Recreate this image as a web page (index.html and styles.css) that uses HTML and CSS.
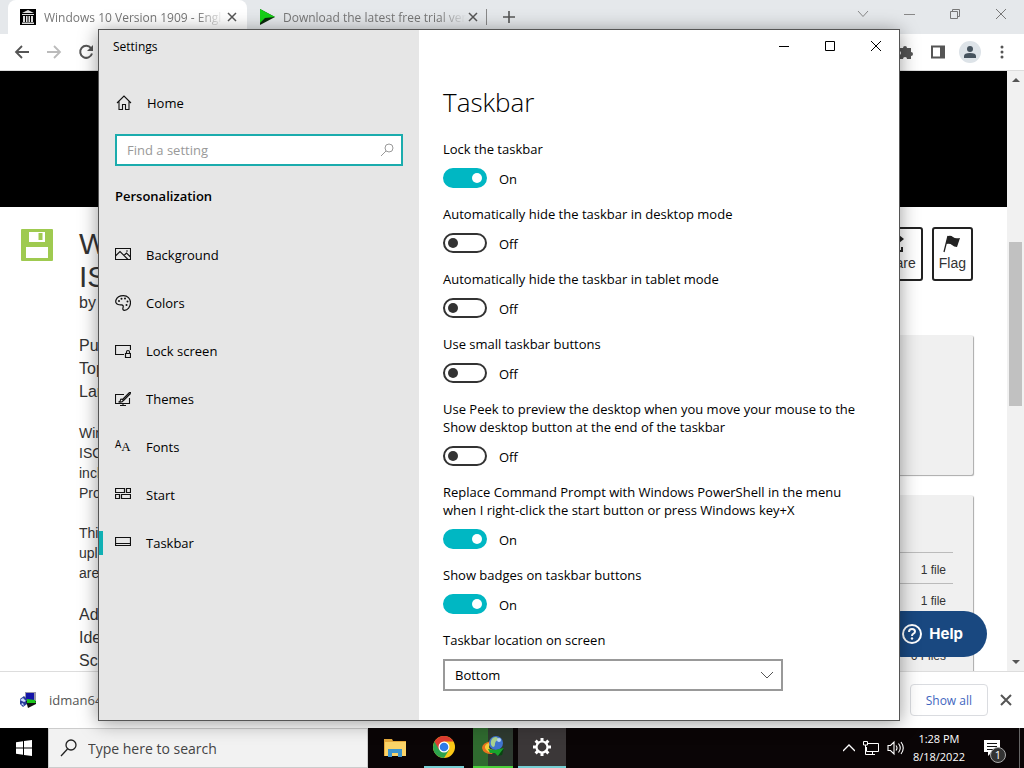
FILE: index.html
```html
<!DOCTYPE html>
<html lang="en">

<head>
    <meta charset="UTF-8">
    <title>Settings - Taskbar</title>
    <meta name="viewport" content="width=device-width, initial-scale=1.0" />
    <link rel="stylesheet" href="styles.css">
</head>

<body>

    <div class="desktop">

        <!-- Browser -->
        <div class="browser">
            <div class="tabs">
                <div class="tab active">
                    <svg class="favicon" width="16" height="16" viewBox="0 0 16 16">
                        <path d="M0 0h16v16H0z" fill="#000" />
                        <path d="M8 1l6 3H2zM2 5h12v1H2zM3 7h2v6H3zM6 7h1.500v6H6zM8.500 7H10v6H8.500zM11 7h2v6h-2zM2 13.500h12V15H2z" fill="#ddd" />
                    </svg>
                    <span class="tab-title">Windows 10 Version 1909 - Engl</span>
                    <button class="icon-btn" aria-label="Close tab">
                        <svg width="10" height="10" viewBox="0 0 10 10"><path d="M1 1l8 8M9 1L1 9" stroke="#555" stroke-width="1.500" /></svg>
                    </button>
                </div>
                <div class="tab">
                    <svg class="favicon" width="16" height="16" viewBox="0 0 16 16">
                        <path d="M1 0l15 8-15 8z" fill="#0b2a0b" />
                        <path d="M1 0l15 8-10 1-5 5z" fill="#16d016" />
                    </svg>
                    <span class="tab-title">Download the latest free trial ver</span>
                    <button class="icon-btn" aria-label="Close tab">
                        <svg width="10" height="10" viewBox="0 0 10 10"><path d="M1 1l8 8M9 1L1 9" stroke="#555" stroke-width="1.500" /></svg>
                    </button>
                </div>
                <button class="icon-btn new-tab" aria-label="New tab">
                    <svg width="12" height="12" viewBox="0 0 12 12"><path d="M6 0v12M0 6h12" stroke="#555" stroke-width="1.600" /></svg>
                </button>
                <div class="browser-controls">
                    <button class="icon-btn" aria-label="Search tabs">
                        <svg width="12" height="12" viewBox="0 0 12 12"><path d="M1 3l5 5.500L11 3" fill="none" stroke="#888" /></svg>
                    </button>
                    <button class="icon-btn" aria-label="Minimize browser">
                        <svg width="12" height="12" viewBox="0 0 12 12"><path d="M1 6.500h11" stroke="#888" /></svg>
                    </button>
                    <button class="icon-btn" aria-label="Restore browser">
                        <svg width="12" height="12" viewBox="0 0 12 12"><path d="M1.500 3.500h7v7h-7zM3.500 3.500v-2h7v7h-2" fill="none" stroke="#777" /></svg>
                    </button>
                    <button class="icon-btn" aria-label="Close browser">
                        <svg width="12" height="12" viewBox="0 0 12 12"><path d="M1 1l10 10M11 1L1 11" stroke="#777" /></svg>
                    </button>
                </div>
            </div>

            <div class="toolbar">
                <button class="icon-btn" aria-label="Back">
                    <svg width="16" height="16" viewBox="0 0 16 16"><path d="M15 8H2M8 2L2 8l6 6" fill="none" stroke="#555" stroke-width="1.800" /></svg>
                </button>
                <button class="icon-btn" aria-label="Forward">
                    <svg width="16" height="16" viewBox="0 0 16 16"><path d="M1 8h13M8 2l6 6-6 6" fill="none" stroke="#bbb" stroke-width="1.800" /></svg>
                </button>
                <button class="icon-btn" aria-label="Reload">
                    <svg width="16" height="16" viewBox="0 0 16 16">
                        <path d="M13 4.200A6 6 0 1 0 14 9.500" fill="none" stroke="#555" stroke-width="2" />
                        <path d="M15 1v6H9z" fill="#555" />
                    </svg>
                </button>
                <div class="toolbar-right">
                    <button class="icon-btn" aria-label="Extensions">
                        <svg width="16" height="16" viewBox="0 0 16 16"><path d="M1 4h4a2 2 0 1 1 4 0h4v4a2 2 0 1 1 0 4v3H9a2 2 0 0 0-4 0H1v-4a2 2 0 0 0 0-4z" fill="#555" /></svg>
                    </button>
                    <button class="icon-btn" aria-label="Side panel">
                        <svg width="16" height="16" viewBox="0 0 16 16"><path d="M2 2.500h12v11H2z" fill="none" stroke="#555" stroke-width="2" /><path d="M10 2h5v12h-5z" fill="#555" /></svg>
                    </button>
                    <button class="icon-btn" aria-label="Profile">
                        <svg width="22" height="22" viewBox="0 0 22 22"><circle cx="11" cy="11" r="11" fill="#dde3e8" /><circle cx="11" cy="8" r="3" fill="#46535e" /><path d="M5 17v-2q0-3 6-3t6 3v2z" fill="#46535e" /></svg>
                    </button>
                    <button class="icon-btn" aria-label="Menu">
                        <svg width="16" height="16" viewBox="0 0 16 16" fill="#555"><circle cx="8" cy="3" r="1.500" /><circle cx="8" cy="8" r="1.500" /><circle cx="8" cy="13" r="1.500" /></svg>
                    </button>
                </div>
            </div>

            <div class="viewport">
                <div class="page">
                    <div class="banner"></div>
                    <div class="item">
                        <svg class="floppy" width="32" height="32" viewBox="0 0 32 32">
                            <rect width="32" height="32" rx="1" fill="#9fca50" />
                            <path d="M8 3h16v10H8zM5 18h22v11H5z" fill="#fff" />
                            <path d="M17.500 4h4v7h-4z" fill="#9fca50" />
                        </svg>
                        <div class="item-info">
                            <h1>W<br>IS</h1>
                            <div class="byline">by</div>
                            <div class="meta">Pu<br>Top<br>Lan</div>
                            <p>Win<br>ISO<br>incl<br>Pro</p>
                            <p>This<br>upl<br>are</p>
                            <div class="meta">Ad<br>Ide<br>Sc</div>
                        </div>
                        <div class="item-side">
                            <div class="actions">
                                <button class="action">
                                    <svg width="18" height="18" viewBox="0 0 18 18"><path d="M3 8v8h11v-4M5 9q0-5 6-5" fill="none" stroke="#222" stroke-width="2" /><path d="M11 0l5 4-5 4z" fill="#222" /></svg>
                                    Share
                                </button>
                                <button class="action">
                                    <svg width="18" height="18" viewBox="0 0 18 18"><path d="M5 1L1 17" stroke="#222" stroke-width="1.300" /><path d="M5 1q3-1 5 1t7 1l-3 9q-3 0-5-2t-6-1z" fill="#222" /></svg>
                                    Flag
                                </button>
                            </div>
                            <div class="card stats"></div>
                            <div class="card downloads">
                                <div class="file-row">1 file</div>
                                <div class="file-row">1 file</div>
                                <div class="file-total">6 Files</div>
                            </div>
                        </div>
                    </div>
                    <button class="help">
                        <svg width="20" height="20" viewBox="0 0 20 20"><circle cx="10" cy="10" r="9" fill="none" stroke="#fff" stroke-width="2" /><path d="M7 8q0-3 3-3t3 2.500q0 1.500-1.500 2.200T10 12" fill="none" stroke="#fff" stroke-width="2" /><circle cx="10" cy="14.500" r="1.200" fill="#fff" /></svg>
                        Help
                    </button>
                </div>
                <div class="scrollbar">
                    <svg width="8" height="4" viewBox="0 0 8 4"><path d="M0 4l4-4 4 4z" fill="#555" /></svg>
                    <div class="thumb"></div>
                    <svg width="8" height="4" viewBox="0 0 8 4"><path d="M0 0l4 4 4-4z" fill="#555" /></svg>
                </div>
            </div>

            <div class="download-bar">
                <svg width="16" height="16" viewBox="0 0 16 16">
                    <path d="M5 0h11v9H5z" fill="#99a" />
                    <path d="M6 1h8v7H6z" fill="#1414a8" />
                    <path d="M0 7l4-3 3 3v5l-4 3-3-3z" fill="#2a3d9c" />
                    <path d="M0 8l3-2 3 3-2 1zM1 12l2-1 1 3z" fill="#cdf" />
                    <path d="M6 9l10 0v3l-8 4z" fill="#111" />
                    <path d="M7 7l8 1 1 3H7z" fill="#1cc81c" />
                </svg>
                <span class="download-name">idman64</span>
                <button class="show-all">Show all</button>
                <button class="icon-btn" aria-label="Close downloads">
                    <svg width="12" height="12" viewBox="0 0 12 12"><path d="M1 1l10 10M11 1L1 11" stroke="#555" stroke-width="2" /></svg>
                </button>
            </div>
        </div>

        <!-- Settings window -->
        <div class="settings">
            <aside class="sidebar">
                <div class="window-title">Settings</div>
                <a class="home" href="#">
                    <svg width="16" height="16" viewBox="0 0 16 16"><path d="M1 8l7-7 7 7M3 6.500V14.500h3.500v-5h3v5H13V6.500" fill="none" stroke="#111" stroke-width="1.100" /></svg>
                    Home
                </a>
                <div class="search">
                    <input type="text" placeholder="Find a setting" aria-label="Find a setting">
                    <svg width="14" height="14" viewBox="0 0 14 14"><circle cx="9" cy="5" r="4" fill="none" stroke="#999" /><path d="M6 8l-5 5" stroke="#999" /></svg>
                </div>
                <h2>Personalization</h2>
                <nav>
                    <a href="#">
                        <svg width="16" height="16" viewBox="0 0 16 16"><path d="M.5 1.500h15v11H.5zM.5 9l4.500-4.500 8 8M9 8.500l2.500-2.500 4 4" fill="none" stroke="#111" stroke-width="1.100" /><circle cx="12" cy="4" r=".8" fill="#111" /></svg>
                        Background
                    </a>
                    <a href="#">
                        <svg width="16" height="16" viewBox="0 0 16 16"><path d="M1 5C2 2 5 .6 8.500.6c4 0 7 3 7 7 0 4.500-3 7.700-6 7.700-1.500 0-2-1-1.500-2.500.6-1.800 0-3-1.500-3S5 10 3 9.500C1 9 .3 7 1 5z" fill="none" stroke="#111" stroke-width="1.200" /><g fill="#111"><circle cx="4" cy="6" r="1" /><circle cx="6.500" cy="3.700" r="1" /><circle cx="10" cy="3.500" r="1" /><circle cx="12.500" cy="6.500" r="1" /><circle cx="11.500" cy="10" r="1" /></g></svg>
                        Colors
                    </a>
                    <a href="#">
                        <svg width="16" height="16" viewBox="0 0 16 16"><path d="M9 11.500H.5v-9h15V7M10.500 10.500h5v4h-5zM11.500 10.500V9q0-1.500 1.500-1.500T14.500 9v1.500" fill="none" stroke="#111" stroke-width="1.200" /></svg>
                        Lock screen
                    </a>
                    <a href="#">
                        <svg width="16" height="16" viewBox="0 0 16 16"><path d="M9 3.500H.5v9h14V7M5 14.500h6M8 12.500v2M14.500 1.500l-7 7M15.500 2.500l-7 7M14.500 1.500h1v1M7.500 8.500l1 1q-1 2-5 1.500 2-.5 2-2t2-.5z" fill="none" stroke="#111" stroke-width="1.100" /></svg>
                        Themes
                    </a>
                    <a href="#">
                        <span class="font-icon" aria-hidden="true"><span>A</span><span class="big">A</span></span>
                        Fonts
                    </a>
                    <a href="#">
                        <svg width="16" height="16" viewBox="0 0 16 16"><path d="M.5 1.500h9v4h-9zM11.500 1.500h4v4h-4zM.5 7.500h4v4h-4zM6.500 7.500h9v4h-9z" fill="none" stroke="#111" stroke-width="1.200" /></svg>
                        Start
                    </a>
                    <a class="current" href="#">
                        <svg width="16" height="16" viewBox="0 0 16 16"><path d="M.5 2.500h15v8H.5zM.5 8.500h15" fill="none" stroke="#111" stroke-width="1.200" /></svg>
                        Taskbar
                    </a>
                </nav>
            </aside>

            <main class="content">
                <div class="window-controls">
                    <button aria-label="Minimize">
                        <svg width="12" height="12" viewBox="0 0 12 12"><path d="M1 6.500h10" stroke="#000" /></svg>
                    </button>
                    <button aria-label="Maximize">
                        <svg width="12" height="12" viewBox="0 0 12 12"><path d="M1.500 1.500h9v9h-9z" fill="none" stroke="#000" /></svg>
                    </button>
                    <button aria-label="Close">
                        <svg width="12" height="12" viewBox="0 0 12 12"><path d="M1 1l10 10M11 1L1 11" stroke="#000" /></svg>
                    </button>
                </div>
                <h1>Taskbar</h1>
                <form class="options">
                    <div class="option">
                        <label for="lock">Lock the taskbar</label>
                        <div class="switch"><input type="checkbox" id="lock" checked><span>On</span></div>
                    </div>
                    <div class="option">
                        <label for="hide-desktop">Automatically hide the taskbar in desktop mode</label>
                        <div class="switch"><input type="checkbox" id="hide-desktop"><span>Off</span></div>
                    </div>
                    <div class="option">
                        <label for="hide-tablet">Automatically hide the taskbar in tablet mode</label>
                        <div class="switch"><input type="checkbox" id="hide-tablet"><span>Off</span></div>
                    </div>
                    <div class="option">
                        <label for="small">Use small taskbar buttons</label>
                        <div class="switch"><input type="checkbox" id="small"><span>Off</span></div>
                    </div>
                    <div class="option">
                        <label for="peek">Use Peek to preview the desktop when you move your mouse to the Show desktop button at the end of the taskbar</label>
                        <div class="switch"><input type="checkbox" id="peek"><span>Off</span></div>
                    </div>
                    <div class="option">
                        <label for="powershell">Replace Command Prompt with Windows PowerShell in the menu when I right-click the start button or press Windows key+X</label>
                        <div class="switch"><input type="checkbox" id="powershell" checked><span>On</span></div>
                    </div>
                    <div class="option">
                        <label for="badges">Show badges on taskbar buttons</label>
                        <div class="switch"><input type="checkbox" id="badges" checked><span>On</span></div>
                    </div>
                    <div class="option">
                        <label for="location">Taskbar location on screen</label>
                        <div class="select">
                            <select id="location">
                                <option>Bottom</option>
                            </select>
                            <svg width="12" height="8" viewBox="0 0 12 8"><path d="M0 1l6 6 6-6" fill="none" stroke="#555" /></svg>
                        </div>
                    </div>
                </form>
            </main>
        </div>
    </div>

    <!-- Taskbar -->
    <div class="taskbar">
        <button class="start" aria-label="Start">
            <svg width="16" height="16" viewBox="0 0 16 16"><path d="M0 2.300l7-1v6.300H0zM8 1.100L16 0v7.600H8zM0 8.500h7v6.200l-7-1zM8 8.500h8V16l-8-1.100z" fill="#fff" /></svg>
        </button>
        <div class="task-search">
            <svg width="18" height="18" viewBox="0 0 18 18"><circle cx="11" cy="6" r="5" fill="none" stroke="#222" stroke-width="1.300" /><path d="M7.500 10L1 17" stroke="#222" stroke-width="1.300" /></svg>
            <input type="text" placeholder="Type here to search" aria-label="Search">
        </div>
        <div class="apps">
            <button class="app" aria-label="File Explorer">
                <svg width="22" height="22" viewBox="0 0 22 22"><path d="M0 2h8l1 2h13v15H0z" fill="#e5a93b" /><path d="M1 5h21v14H1z" fill="#fbd468" /><path d="M4 12h14v8h-4v-4H8v4H4z" fill="#3d95cd" /></svg>
            </button>
            <button class="app running" aria-label="Chrome">
                <svg width="24" height="24" viewBox="0 0 24 24"><circle cx="12" cy="12" r="11" fill="#fbc817" /><path d="M12 12L2.500 6.500A11 11 0 0 0 12 23l5-8z" fill="#2da34d" /><path d="M2.500 6.500A11 11 0 0 1 21.500 6.500H12l-5 8z" fill="#e03c31" /><circle cx="12" cy="12" r="5.500" fill="#fff" /><circle cx="12" cy="12" r="4.300" fill="#2f7be8" /></svg>
            </button>
            <button class="app idm" aria-label="Internet Download Manager">
                <svg width="24" height="24" viewBox="0 0 24 24">
                    <path d="M10 6Q1 8 1 13q1 6 10 6l2-3Q5 16 5 12t6-3z" fill="#e8731e" />
                    <path d="M10 7Q3 9 4 13q2 5 9 5l1-3q-6 0-6-3t4-3z" fill="#f3cf3a" />
                    <circle cx="15" cy="8" r="7" fill="#3f74cf" />
                    <path d="M10 6q1-4 5-4 3 1 2 3-3 1-3 4t-2 3q-3-2-2-6z" fill="#a9d28f" />
                    <circle cx="18" cy="5" r="2" fill="#b9d6f5" />
                    <path d="M7 14l7 1 9-2-6 8-3-3-5 0z" fill="#18a52c" />
                    <path d="M17 21l6-8-2 7z" fill="#06470f" />
                </svg>
            </button>
            <button class="app focused" aria-label="Settings">
                <svg width="20" height="20" viewBox="0 0 20 20"><circle cx="10" cy="10" r="5.500" fill="none" stroke="#fff" stroke-width="2.200" /><path d="M10 1v4M10 15v4M1 10h4M15 10h4M3.600 3.600l2.900 2.900M13.500 13.500l2.900 2.900M3.600 16.400l2.900-2.900M13.500 6.500l2.900-2.900" stroke="#fff" stroke-width="3" /></svg>
            </button>
        </div>
        <div class="tray">
            <svg width="12" height="8" viewBox="0 0 12 8"><path d="M0 7l6-6 6 6" fill="none" stroke="#fff" stroke-width="1.300" /></svg>
            <svg width="16" height="16" viewBox="0 0 16 16"><path d="M5 3.500h10.500v8H3.500V7M.5 1.500h4V5h-4zM2.500 5v9.500H12M9.500 11.500v3" fill="none" stroke="#fff" /></svg>
            <svg width="18" height="16" viewBox="0 0 18 16"><path d="M1 5.500h2.500L7 2v12l-3.500-3.500H1zM9 5.500q2 2.500 0 5M11.500 3.500q3.500 4.500 0 9M14 2q4.500 6 0 12" fill="none" stroke="#fff" stroke-width="1.100" /></svg>
            <div class="clock">1:28 PM<br>8/18/2022</div>
            <button class="notifications" aria-label="Notifications">
                <svg width="18" height="18" viewBox="0 0 18 18"><path d="M1 1h16v12H9l-4 4v-4H1z" fill="#fff" /><path d="M4 4.500h10M4 7.500h10M4 10.500h6" stroke="#111" /></svg>
                <span class="badge">1</span>
            </button>
        </div>
    </div>

</body>

</html>
```
FILE: styles.css
```css
* {
    box-sizing: border-box;
}

body {
    margin: 0;
    height: 100vh;
    overflow: hidden;
    display: flex;
    flex-direction: column;
    font-family: 'Open Sans', 'Noto Sans', sans-serif;
    font-size: 13px;
    color: #000;
    background-color: #fff;
}

button,
input,
select {
    font: inherit;
    color: inherit;
    border: none;
    padding: 0;
    background: none;
}

svg {
    display: block;
    flex-shrink: 0;
}

a {
    color: inherit;
    text-decoration: none;
}

.desktop {
    position: relative;
    flex: 1;
    min-height: 0;
}

/* Browser */

.browser {
    height: 100%;
    display: flex;
    flex-direction: column;
    overflow: hidden;
}

.icon-btn {
    display: flex;
    align-items: center;
    justify-content: center;
    width: 16px;
    height: 16px;
}

.tabs {
    display: flex;
    align-items: center;
    height: 34px;
    padding-left: 8px;
    background-color: #e5e8eb;
    color: #777;
    font-size: 12px;
}

.tab {
    display: flex;
    align-items: center;
    width: 239px;
    height: 34px;
    padding: 0 7px 0 12px;
    border-radius: 8px 8px 0 0;
}

.tab.active {
    background-color: #fff;
}

.tab-title {
    flex: 1;
    white-space: nowrap;
    margin-left: 8px;
    mask-image: linear-gradient(to right, #000 85%, transparent);
}

.new-tab {
    width: 44px;
    border-left: 1px solid #888;
}

.browser-controls {
    display: flex;
    gap: 30px;
    margin-left: auto;
    padding: 0 15px 6px 0;
}

.toolbar {
    display: flex;
    align-items: center;
    gap: 16px;
    height: 37px;
    padding: 0 14px;
    background-color: #fff;
    border-bottom: 1px solid #ddd;
}

.toolbar-right {
    display: flex;
    gap: 16px;
    margin-left: auto;
}

.viewport {
    flex: 1;
    min-height: 0;
    display: flex;
}

.page {
    position: relative;
    flex: 1;
    overflow: hidden;
    font-family: 'Liberation Sans', Arial, sans-serif;
    font-size: 14px;
    line-height: 20px;
    color: #333;
}

.banner {
    height: 136px;
    background-color: #000;
}

.item {
    display: flex;
    padding: 20px 34px 0 21px;
}

.floppy {
    margin-top: 2px;
}

.item-info {
    flex: 1;
    margin-left: 26px;
}

.item-info h1 {
    margin: 0;
    font-size: 30px;
    font-weight: 400;
    line-height: 33px;
}

.byline {
    font-size: 16px;
    margin-bottom: 21px;
}

.meta {
    font-size: 16px;
    line-height: 23px;
}

.item-info p {
    margin: 20px 0;
}

.item-side {
    width: 300px;
}

.actions {
    display: flex;
    justify-content: flex-end;
    gap: 9px;
    margin-bottom: 54px;
}

.action {
    display: flex;
    flex-direction: column;
    align-items: center;
    justify-content: center;
    height: 54px;
    padding: 0 5px;
    border: 2px solid #222;
    border-radius: 3px;
    background-color: #fff;
}

.card {
    background-color: #f0f0f0;
    border-radius: 2px;
    box-shadow: 1px 1px 1px #aaa;
}

.stats {
    height: 140px;
    margin-bottom: 20px;
}

.downloads {
    height: 200px;
    padding: 57px 20px 0;
    font-size: 12px;
    text-align: right;
}

.file-row {
    padding: 7px 7px 3px;
    border-top: 1px solid #bbb;
}

.file-total {
    padding: 32px 7px 0;
}

.help {
    position: absolute;
    right: 20px;
    bottom: 14px;
    display: flex;
    align-items: center;
    gap: 7px;
    height: 46px;
    padding: 0 24px;
    border-radius: 23px;
    background-color: #194880;
    color: #fff;
    font-family: Inter, sans-serif;
    font-size: 15px;
    font-weight: 700;
}

.scrollbar {
    display: flex;
    flex-direction: column;
    align-items: center;
    justify-content: space-between;
    width: 17px;
    padding: 7px 0;
    background-color: #f1f1f1;
}

.thumb {
    width: 13px;
    height: 28%;
    margin-bottom: 94px;
    background-color: #c1c1c1;
}

.download-bar {
    display: flex;
    align-items: center;
    height: 57px;
    padding: 0 10px 0 20px;
    border-top: 1px solid #ddd;
    background-color: #fff;
}

.download-name {
    flex: 1;
    margin-left: 13px;
    color: #555;
}

.show-all {
    height: 32px;
    padding: 0 15px;
    margin-right: 10px;
    border: 1px solid #dadce0;
    border-radius: 4px;
    color: #3f66c0;
    font-size: 12px;
}

/* Settings window */

.settings {
    position: absolute;
    top: 29px;
    left: 98px;
    right: 124px;
    bottom: 7px;
    display: flex;
    border: 1px solid #555;
    background-color: #fff;
    box-shadow: 0 2px 18px rgba(0, 0, 0, 0.4);
}

.sidebar {
    width: 320px;
    background-color: #e6e6e6;
}

.window-title {
    padding-left: 14px;
    font-size: 12px;
    line-height: 34px;
}

.home {
    display: flex;
    align-items: center;
    gap: 15px;
    height: 48px;
    margin-top: 15px;
    padding-left: 17px;
}

.search {
    display: flex;
    align-items: center;
    height: 32px;
    margin: 7px 16px 0;
    padding: 0 7px 0 10px;
    border: 2px solid #1bacad;
    background-color: #fff;
}

.search input {
    flex: 1;
    min-width: 0;
    outline: none;
}

.search input::placeholder {
    color: #999;
    opacity: 1;
}

.sidebar h2 {
    margin: 20px 16px 25px;
    font-size: 13px;
    font-weight: 600;
    line-height: 20px;
}

nav a {
    position: relative;
    display: flex;
    align-items: center;
    gap: 15px;
    height: 48px;
    padding-left: 16px;
}

nav .current::before {
    content: '';
    position: absolute;
    left: 0;
    width: 4px;
    height: 24px;
    background-color: #10b0b4;
}

.font-icon {
    display: flex;
    width: 16px;
    font-size: 10px;
    line-height: 10px;
}

.font-icon .big {
    font-family: 'Liberation Serif', serif;
    font-size: 13px;
    line-height: 16px;
}

.content {
    flex: 1;
    min-width: 0;
    overflow: hidden;
}

.window-controls {
    display: flex;
    justify-content: flex-end;
}

.window-controls button {
    display: flex;
    align-items: center;
    justify-content: center;
    width: 46px;
    height: 32px;
}

.content h1 {
    margin: 22px 24px 20px;
    font-size: 26px;
    font-weight: 300;
    line-height: 36px;
}

.options {
    display: flex;
    flex-direction: column;
    gap: 17px;
    padding: 0 24px;
}

.option {
    display: flex;
    flex-direction: column;
    align-items: flex-start;
    gap: 10px;
    max-width: 430px;
    line-height: 18px;
}

.switch {
    display: flex;
    align-items: center;
    gap: 12px;
    height: 20px;
}

.switch span {
    padding-top: 2px;
}

.switch input {
    appearance: none;
    display: flex;
    align-items: center;
    width: 44px;
    height: 20px;
    margin: 0;
    padding: 0 3px;
    border: 2px solid #333;
    border-radius: 10px;
}

.switch input::before {
    content: '';
    width: 10px;
    height: 10px;
    border-radius: 50%;
    background-color: #333;
}

.switch input:checked {
    justify-content: flex-end;
    border-color: #00b7c3;
    background-color: #00b7c3;
}

.switch input:checked::before {
    background-color: #fff;
}

.select {
    position: relative;
    width: 340px;
    max-width: 100%;
}

.select select {
    appearance: none;
    width: 100%;
    height: 32px;
    padding: 0 10px;
    border: 2px solid #999;
    background-color: #fff;
}

.select svg {
    position: absolute;
    top: 12px;
    right: 10px;
    pointer-events: none;
}

/* Taskbar */

.taskbar {
    display: flex;
    height: 40px;
    background-color: #0a0506;
    color: #fff;
}

.start {
    display: flex;
    align-items: center;
    justify-content: center;
    width: 48px;
    background-color: #000;
}

.task-search {
    display: flex;
    align-items: center;
    gap: 10px;
    width: 320px;
    padding-left: 11px;
    background-color: #f2f2f2;
    border: 1px solid #ccc;
    color: #333;
    font-size: 14px;
}

.task-search input {
    flex: 1;
    min-width: 0;
}

.task-search input::placeholder {
    color: #444;
    opacity: 1;
}

.apps {
    display: flex;
    padding-left: 7px;
}

.app {
    display: flex;
    align-items: center;
    justify-content: center;
    width: 40px;
    margin-right: 9px;
}

.running {
    border-bottom: 2px solid #76cfd4;
}

.idm {
    margin-right: 5px;
    border-bottom: 2px solid #4bd13b;
    background: linear-gradient(to right, #2f6a2f 38%, #2e3a30 38%);
}

.focused {
    width: 48px;
    border-bottom: 2px solid #76cfd4;
    background-color: #3b3738;
}

.tray {
    display: flex;
    align-items: center;
    gap: 8px;
    margin-left: auto;
    margin-right: 4px;
    padding-right: 18px;
    border-right: 1px solid #666;
}

.tray .clock {
    font-size: 11px;
    line-height: 18px;
    text-align: center;
}

.notifications {
    position: relative;
    margin-left: 10px;
}

.badge {
    position: absolute;
    top: 8px;
    left: 7px;
    width: 16px;
    border: 1px solid #aaa;
    border-radius: 50%;
    background-color: #333;
    color: #fff;
    font-size: 11px;
    line-height: 14px;
}
```
